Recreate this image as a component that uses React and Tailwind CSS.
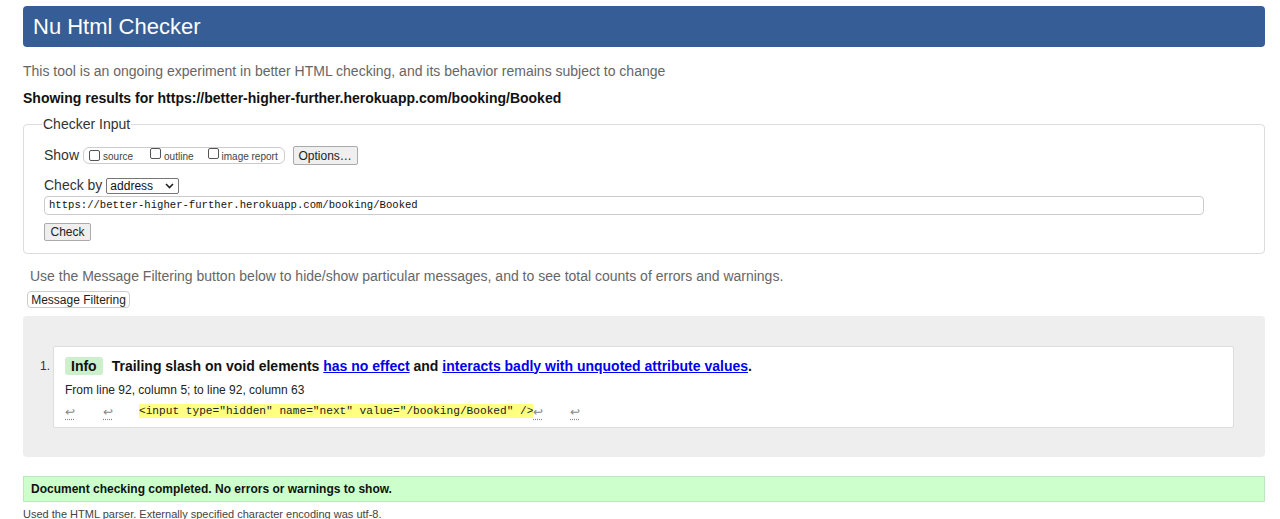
import React from "react";

const sans = "font-['Liberation_Sans',Arial,sans-serif]";
const mono = "font-['Liberation_Mono','DejaVu_Sans_Mono',monospace]";

function Ret() {
  return (
    <span className="inline-block text-[#888] underline decoration-dotted decoration-[#888] underline-offset-[3px] text-[12px]">
      ↩
    </span>
  );
}

function Check() {
  return (
    <span className="inline-block w-[11px] h-[11px] border border-[#555] rounded-[2px] bg-white"></span>
  );
}

export default function App() {
  return (
    <div className={`w-[1280px] h-[519px] overflow-hidden bg-white pl-[23px] pr-[15px] ${sans} text-[#222]`}>
      <div className="mt-[6px] h-[41px] rounded-[4px] bg-[#365d95] flex items-center pl-[10px] text-[22px] text-white">
        Nu Html Checker
      </div>

      <div className="mt-[16px] text-[14px] leading-[16px] text-[#666]">
        This tool is an ongoing experiment in better HTML checking, and its behavior remains subject to change
      </div>
      <div className="mt-[11px] text-[14px] leading-[16px] font-bold text-[#111]">
        Showing results for https://better-higher-further.herokuapp.com/booking/Booked
      </div>

      <fieldset className="mt-[10px] border border-[#ddd] rounded-[4px] pl-[20px] pr-[20px] pt-[14px] pb-[12px]">
        <legend className="-ml-[2px] px-[1px] text-[14px] leading-[16px] text-[#333]">Checker Input</legend>
        <div className="flex items-center h-[19px]">
          <span className="text-[14px] text-[#333]">Show</span>
          <span className="ml-[4px] h-[17px] border border-[#ccc] rounded-[6px] flex items-center pl-[5px] pr-[6px] text-[10px] text-[#444]">
            <Check />
            <span className="ml-[3px] mt-[2px]">source</span>
            <span className="ml-[17px]"><Check /></span>
            <span className="ml-[3px] mt-[2px]">outline</span>
            <span className="ml-[14px]"><Check /></span>
            <span className="ml-[3px] mt-[2px]">image report</span>
          </span>
          <span className="ml-[8px] h-[19px] w-[65px] flex items-center justify-center border border-[#aaa] bg-[#efefef] rounded-[2px] text-[12px] text-[#222]">
            Options…
          </span>
        </div>
        <div className="mt-[12px] flex items-center h-[17px]">
          <span className="text-[14px] text-[#333]">Check by</span>
          <span className="ml-[4px] h-[16px] w-[73px] border border-[#767676] rounded-[2px] flex items-center justify-between pl-[3px] pr-[4px] text-[12px] text-[#111]">
            address
            <svg width="9" height="6" viewBox="0 0 9 6"><path d="M1 1l3.5 3.5L8 1" fill="none" stroke="#222" strokeWidth="1.6" /></svg>
          </span>
        </div>
        <div className={`mt-[2px] h-[19px] w-[1160px] border border-[#ccc] rounded-[4px] flex items-center pl-[4px] ${mono} text-[10.6px] text-[#111]`}>
          https://better-higher-further.herokuapp.com/booking/Booked
        </div>
        <div className="mt-[8px] h-[18px] w-[47px] flex items-center justify-center border border-[#aaa] bg-[#efefef] rounded-[2px] text-[12px] text-[#222]">
          Check
        </div>
      </fieldset>

      <div className="mt-[14px] pl-[7px] text-[14px] leading-[16px] text-[#666]">
        Use the Message Filtering button below to hide/show particular messages, and to see total counts of errors and warnings.
      </div>
      <div className="mt-[7px] ml-[4px] h-[17px] w-[103px] flex items-center justify-center border border-[#ccc] rounded-[4px] bg-white text-[12px] text-[#222]">
        Message Filtering
      </div>

      <div className="mt-[8px] h-[141px] rounded-[4px] bg-[#eee] flex pl-[17px] pr-[31px] pt-[30px]">
        <div className="w-[13px] pt-[12px] text-[12px] leading-[16px] text-[#333]">1.</div>
        <div className="flex-1 h-[82px] bg-white border border-[#ddd] rounded-[2px] pl-[11px] pt-[10px]">
          <div className="flex items-center h-[18px] text-[14px] font-bold text-[#111]">
            <span className="h-[18px] px-[6px] flex items-center bg-[#ccf0cc] rounded-[3px]">Info</span>
            <span className="ml-[9px]">
              Trailing slash on void elements{" "}
              <span className="text-[#0000ee] underline">has no effect</span> and{" "}
              <span className="text-[#0000ee] underline">interacts badly with unquoted attribute values</span>.
            </span>
          </div>
          <div className="mt-[8px] text-[12px] leading-[14px] text-[#222]">
            From line 92, column 5; to line 92, column 63
          </div>
          <div className="mt-[7px] flex items-center h-[14px]">
            <span className="w-[38px]"><Ret /></span>
            <span className="w-[36px]"><Ret /></span>
            <span className={`bg-[#ffff80] ${mono} text-[11.15px] leading-[14px] text-[#222] whitespace-pre`}>
              {'<input type="hidden" name="next" value="/booking/Booked" />'}
            </span>
            <span className="w-[37px]"><Ret /></span>
            <span><Ret /></span>
          </div>
        </div>
      </div>

      <div className="mt-[19px] h-[26px] bg-[#ccffcc] border border-[#bde8bd] flex items-center pl-[7px] text-[12px] font-bold text-[#111]">
        Document checking completed. No errors or warnings to show.
      </div>
      <div className="mt-[6px] text-[11px] leading-[13px] text-[#444]">
        Used the HTML parser. Externally specified character encoding was utf-8.
      </div>
    </div>
  );
}
